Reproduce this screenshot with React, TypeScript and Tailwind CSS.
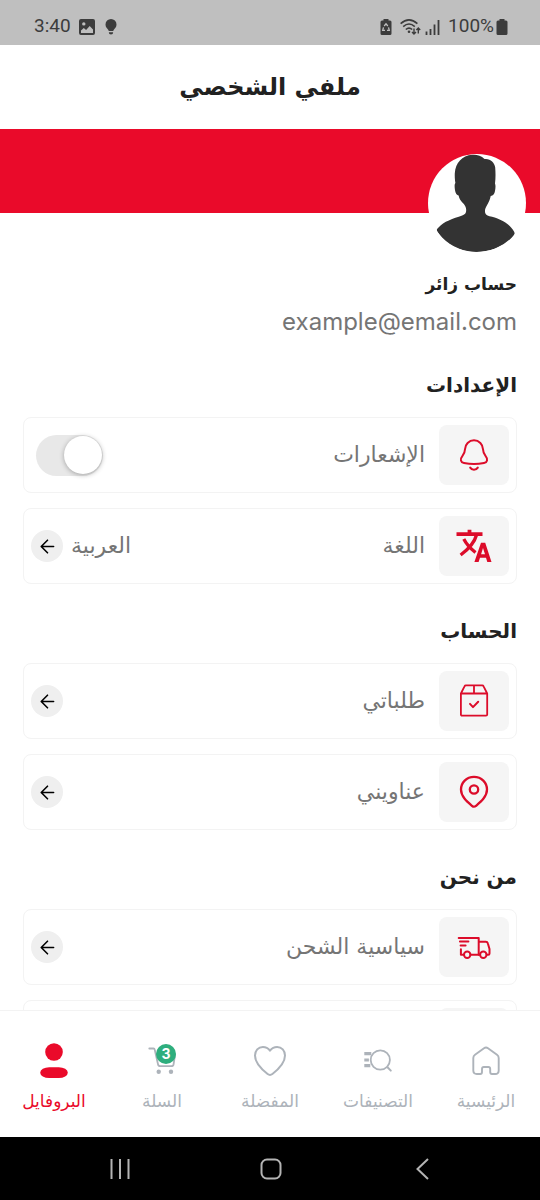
import type { ReactNode } from "react";

const Svg = ({ children, className = "size-9" }: { children: ReactNode; className?: string }) => (
  <svg
    viewBox="0 0 36 36"
    fill="none"
    stroke="currentColor"
    strokeWidth="2"
    strokeLinecap="round"
    strokeLinejoin="round"
    className={className}
    aria-hidden="true"
  >
    {children}
  </svg>
);

const BellIcon = () => (
  <Svg>
    <path d="M9 12.300a9 9 0 0 1 18 0c.1 3 .8 4.500 2.500 6.500 2.800 3.400 1.800 6.600-1.500 7.300-5.500 1.100-14.500 1.100-20 0-3.300-.7-4.300-3.900-1.500-7.300 1.700-2 2.400-3.500 2.500-6.500Z" />
    <path d="M14.200 30.600c2 3 5.600 3 7.600 0" />
  </Svg>
);

const TranslateIcon = () => (
  <Svg>
    <path strokeWidth="3.800" strokeLinecap="butt" d="M.5 6.200h26M13.500 1.700v4" />
    <path strokeWidth="3.300" strokeLinecap="butt" d="M20.500 7C18.500 14.500 12 21.500 4.600 27M7.800 11c2.500 5 6.700 9.500 11.700 13.500" />
    <path
      fill="currentColor"
      stroke="none"
      fillRule="evenodd"
      d="M25 14.700h4.200L35.500 34h-4.200l-1.300-4.300h-6L22.600 34h-4.200L25 14.700Zm2 5.300-1.900 6.300h3.900L27 20Z"
    />
  </Svg>
);

const BoxIcon = () => (
  <Svg>
    <path strokeWidth="1.800" d="M4.900 10.500h26.300V31.500q0 1.200-1.200 1.200H6.100q-1.200 0-1.200-1.200V10.500l3.600-7.200q.4-.9 1.400-.9h16.300q1 0 1.400.9l3.600 7.200M18 2.400v8.100" />
    <path d="m14 20.900 3 3.200 5.200-5.400" />
  </Svg>
);

const PinIcon = () => (
  <Svg>
    <path strokeWidth="2.300" d="M18 2.900C10.500 2.900 5 8.500 5 15.500c0 7 6 12 11 16.300q2 1.700 4 0c5-4.300 11-9.300 11-16.300C31 8.500 25.500 2.900 18 2.900Z" />
    <circle cx="18" cy="15.500" r="4.200" strokeWidth="2.300" />
  </Svg>
);

const TruckIcon = () => (
  <Svg>
    <path d="M2.700 9h20v17M3.900 12.400h8.500M4.600 16.600h5M4.900 20.200V25.800h2.900M14.600 25.800h9.200M22.700 12.700h7.100q1.600 0 2 1.500l1.700 5.800v4.600q0 1.200-1.200 1.200h-1.600" />
    <circle cx="11.200" cy="25.800" r="3.200" />
    <circle cx="27.300" cy="25.800" r="3.200" />
  </Svg>
);

const HomeIcon = () => (
  <Svg>
    <path
      strokeWidth="1.900"
      d="M5.300 15q0-2 1.700-3.200L16 5.200q2-1.400 4 0l9 6.600q1.700 1.200 1.700 3.200v12.500q0 3.500-3.500 3.500h-3.200q-1.800 0-1.800-2v-3q0-2-1.800-2h-4.600q-1.800 0-1.800 2v3q0 2-1.800 2H8.800q-3.500 0-3.500-3.500Z"
    />
  </Svg>
);

const CategoriesIcon = () => (
  <Svg>
    <circle cx="20.300" cy="17" r="9.600" strokeWidth="1.800" />
    <path d="m27.500 24.300 3.300 3.300" />
    <path strokeWidth="3.200" strokeLinecap="butt" d="M4.300 10.700h7M4.300 17h4.600M4.300 22.700h6" />
  </Svg>
);

const HeartIcon = () => (
  <Svg>
    <path d="M18 7.600C16 5 13.500 3.900 10.900 3.900 6.300 3.900 3 7.800 3 12.500 3 20.500 10.500 27 15.600 31q2.400 1.800 4.800 0C25.500 27 33 20.500 33 12.500c0-4.700-3.300-8.600-7.900-8.600C22.500 3.900 20 5 18 7.600Z" />
  </Svg>
);

const CartIcon = () => (
  <Svg>
    <path strokeWidth="1.800" d="M5.300 5.500h4.200q1 0 1.200 1l3.300 14.700q.4 2 2.400 2h10.800q2 0 2.400-2L31 12" />
    <circle cx="14.700" cy="28.700" r="2.200" fill="currentColor" stroke="none" />
    <circle cx="27" cy="28.700" r="2.200" fill="currentColor" stroke="none" />
  </Svg>
);

const ProfileIcon = () => (
  <Svg>
    <circle cx="18" cy="9" r="8.800" fill="currentColor" stroke="none" />
    <rect x="4.200" y="24.300" width="27.600" height="10.700" rx="9" ry="5.350" fill="currentColor" stroke="none" />
  </Svg>
);

const StatusBar = () => (
  <div dir="ltr" className="flex h-[45px] shrink-0 items-center justify-between bg-[#bfbfbf] pt-2 pr-8 pl-[34px] font-[Roboto,sans-serif] text-[19px] text-[#3c3c3c]">
    <div className="flex items-center gap-2">
      <span>3:40</span>
      <svg viewBox="0 0 16 16" className="size-4" aria-hidden="true">
        <path
          fill="currentColor"
          fillRule="evenodd"
          d="M2 0h12q2 0 2 2v12q0 2-2 2H2q-2 0-2-2V2q0-2 2-2Zm2.800 3.200a1.700 1.700 0 1 0 0 3.400 1.700 1.700 0 0 0 0-3.400ZM2 11.500V14h12v-3.500L10.700 7l-3.600 4-2.300-2Z"
        />
      </svg>
      <svg viewBox="0 0 16 16" className="size-4" fill="currentColor" aria-hidden="true">
        <path d="M8 0a5.500 5.500 0 0 0-5.500 5.500C2.500 8 4 9.200 5 10.500q.5.800.8 1.500h4.400q.3-.7.800-1.500c1-1.300 2.500-2.500 2.500-5A5.500 5.500 0 0 0 8 0ZM5.800 13.200h4.400a2.200 2.200 0 0 1-4.400 0Z" />
      </svg>
    </div>
    <div className="flex items-center gap-1">
      <svg viewBox="0 0 12 16" className="mr-1 h-4 w-3" aria-hidden="true">
        <path fill="currentColor" d="M3.500 1.500V0h5v1.500H10q1.500 0 1.500 1.500v11.500Q11.500 16 10 16H2Q.5 16 .5 14.500V3Q.5 1.500 2 1.500Z" />
        <path fill="none" stroke="#bfbfbf" strokeWidth="1.300" d="M4.200 7 6 4.800 7.800 7M3.500 8.300 2.700 11.300h2.300M8.500 8.300l.8 3H7" />
      </svg>
      <svg viewBox="0 0 21 16" className="h-4 w-[21px]" fill="none" stroke="currentColor" strokeWidth="1.600" aria-hidden="true">
        <path d="M.6 4.600q8.400-7.500 16.800 0M3.200 7.600q5.800-5.200 11.600 0M5.800 10.500q3.200-2.800 6.400 0" />
        <circle cx="9" cy="12.800" r="1.300" fill="currentColor" stroke="none" />
        <path strokeWidth="1.400" d="M14 9.500v5.500m-2-2 2 2 2-2M18.300 14.500V9m-1.900 2 1.900-2 1.900 2" />
      </svg>
      <svg viewBox="0 0 15 16" className="h-4 w-[15px]" fill="none" stroke="currentColor" strokeWidth="1.800" aria-hidden="true">
        <path d="M1.500 16v-3.500M5.500 16v-6M9.500 16V5.500M13.500 16V1" />
      </svg>
      <div className="ml-1 flex items-center gap-0.5">
        <span>100%</span>
        <svg viewBox="0 0 12 16" className="h-4 w-3" fill="currentColor" aria-hidden="true">
          <path d="M3.500 1.500V0h5v1.500H10q1.500 0 1.500 1.500v11.500Q11.500 16 10 16H2Q.5 16 .5 14.500V3Q.5 1.500 2 1.500Z" />
        </svg>
      </div>
    </div>
  </div>
);

const Avatar = () => (
  <svg viewBox="0 0 98 98" className="size-[98px] rounded-full bg-white" aria-hidden="true">
    <path
      fill="#333"
      d="M44.200.8C34 1.500 27.500 9 26.800 19.300c-.2 4 .2 7 .6 9.700-1.300 1-.8 6 .2 9.500.8 2.700 2.200 2.500 3 3 .7 3.300 2 5 3.300 6.500 3 3 4.300 5 4.300 8 0 3-1 4.200-4 5.500-9 3-18.600 6-23.700 12-1.700 1.700-2.200 2.500-.9 4.500C17 90 31 98 47.500 98S78.500 91 85.500 82c1.400-2 1.300-3 .5-4.500C81 68.500 70 64 61.500 62.300c-3-.8-4.600-2.500-4.600-5.300 0-3 2-5 3.300-8 1.300-2.500 2-4.500 2.500-7 2.500-.5 3.800-2 4.300-5 .5-3 .8-5.500 0-7.500.7-5.500.6-11 .2-16C66.500 8 62 4.200 56.500 5 53 1.500 49 .5 44.200.8Z"
    />
  </svg>
);

const ArrowBadge = () => (
  <span className="flex size-8 items-center justify-center rounded-full bg-[#efefef] text-black">
    <svg viewBox="0 0 16 16" className="size-[15px]" fill="none" stroke="currentColor" strokeWidth="1.700" strokeLinecap="round" strokeLinejoin="round" aria-hidden="true">
      <path d="M14.500 8H1.500M8 1.300 1.300 8 8 14.700" />
    </svg>
  </span>
);

const IconTile = ({ children }: { children?: ReactNode }) => (
  <span className="flex h-[60px] w-[70px] shrink-0 items-center justify-center rounded-lg bg-[#f5f5f5] text-[#dc0c2a]">
    {children}
  </span>
);

const CARD = "flex w-full items-center gap-3.5 rounded-lg border border-[#f3f3f3] bg-white p-[7px] text-[22px] leading-8 text-[#757575]";

const LinkRow = ({ icon, label, value }: { icon: ReactNode; label: string; value?: string }) => (
  <a href="#" className={CARD}>
    <IconTile>{icon}</IconTile>
    <span className="flex-1">{label}</span>
    <span className="flex items-center gap-2">
      {value}
      <ArrowBadge />
    </span>
  </a>
);

const Section = ({ title, children }: { title: string; children: ReactNode }) => (
  <section className="mt-[31px]">
    <h2 className="mb-4 text-xl leading-8 font-bold text-[#212121]">{title}</h2>
    <div className="flex flex-col gap-[15px]">{children}</div>
  </section>
);

const tabs = [
  { label: "الرئيسية", icon: <HomeIcon /> },
  { label: "التصنيفات", icon: <CategoriesIcon /> },
  { label: "المفضلة", icon: <HeartIcon /> },
  { label: "السلة", icon: <CartIcon />, badge: 3 },
  { label: "البروفايل", icon: <ProfileIcon />, active: true },
];

const TabBar = () => (
  <nav className="grid shrink-0 grid-cols-5 border-t border-[#f3f3f3] bg-white pt-8 pb-6">
    {tabs.map((tab) => (
      <a
        key={tab.label}
        href="#"
        aria-current={tab.active ? "page" : undefined}
        className={`flex flex-col items-center gap-2.5 ${tab.active ? "text-[#ea0a2a]" : "text-[#adb3ba]"}`}
      >
        <span className="relative">
          {tab.icon}
          {tab.badge && (
            <span className="absolute top-px left-3 flex size-5 items-center justify-center rounded-full bg-[#2eae7d] font-[Inter,sans-serif] text-sm font-bold text-white">
              {tab.badge}
            </span>
          )}
        </span>
        <span className="text-[17px] leading-6 whitespace-nowrap">{tab.label}</span>
      </a>
    ))}
  </nav>
);

const SystemBar = () => (
  <div dir="ltr" className="grid h-[63px] shrink-0 grid-cols-3 bg-black pr-[42px] pl-11 text-[#b4b4b4]">
    <button type="button" aria-label="التطبيقات الأخيرة" className="flex items-center justify-center">
      <svg viewBox="0 0 22 22" className="size-[22px]" stroke="currentColor" strokeWidth="2">
        <path d="M2.500 1v20M11 1v20M19.500 1v20" />
      </svg>
    </button>
    <button type="button" aria-label="الشاشة الرئيسية" className="flex items-center justify-center">
      <svg viewBox="0 0 22 22" className="size-[22px]" fill="none" stroke="currentColor" strokeWidth="2">
        <rect x="1.500" y="1.500" width="19" height="19" rx="5.500" />
      </svg>
    </button>
    <button type="button" aria-label="رجوع" className="flex items-center justify-center">
      <svg viewBox="0 0 22 22" className="size-[22px]" fill="none" stroke="currentColor" strokeWidth="2">
        <path d="M17 1 6.500 11 17 21" />
      </svg>
    </button>
  </div>
);

const App = () => {
  return (
    <div dir="rtl" lang="ar" className="flex h-screen flex-col bg-white font-['DejaVu_Sans',sans-serif]">
      <StatusBar />

      <header className="flex h-[84px] shrink-0 items-center justify-center">
        <h1 className="text-2xl font-bold text-[#212121]">ملفي الشخصي</h1>
      </header>

      <main className="min-h-0 flex-1 overflow-y-auto [scrollbar-width:none]">
        <div className="h-[84px] bg-[#ea0a2a]" />
        <div className="relative -mt-[59px] pr-3.5">
          <Avatar />
        </div>

        <div className="px-[23px] pb-4">
          <p className="mt-4 text-[17px] leading-8 font-bold text-[#212121]">حساب زائر</p>
          <p className="mt-1.5 font-[Inter,sans-serif] text-2xl leading-8 text-[#757575]">example@email.com</p>

          <Section title="الإعدادات">
            <div className={CARD}>
              <IconTile>
                <BellIcon />
              </IconTile>
              <label htmlFor="notifications" className="flex-1">
                الإشعارات
              </label>
              <input
                id="notifications"
                type="checkbox"
                role="switch"
                className="ml-[5px] flex h-[41px] w-[67px] appearance-none items-center rounded-full bg-[#e8e8e8] px-px before:size-[38px] before:rounded-full before:bg-white before:shadow-[0_1px_5px_rgba(0,0,0,0.3)] checked:justify-end checked:bg-[#ea0a2a]"
              />
            </div>
            <LinkRow icon={<TranslateIcon />} label="اللغة" value="العربية" />
          </Section>

          <Section title="الحساب">
            <LinkRow icon={<BoxIcon />} label="طلباتي" />
            <LinkRow icon={<PinIcon />} label="عناويني" />
          </Section>

          <Section title="من نحن">
            <LinkRow icon={<TruckIcon />} label="سياسية الشحن" />
            <div className={CARD}>
              <IconTile />
            </div>
          </Section>
        </div>
      </main>

      <TabBar />
      <SystemBar />
    </div>
  );
};

export default App;
